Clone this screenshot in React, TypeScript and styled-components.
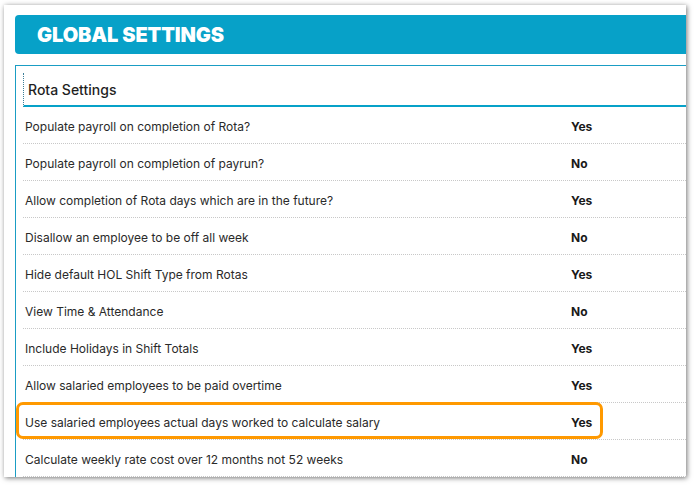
import React from "react";
import styled, { createGlobalStyle } from "styled-components";

const Global = createGlobalStyle`
  html, body { margin: 0; padding: 0; background: #ffffff; }
  body { font-family: Inter, "Noto Sans", Arial, sans-serif; }
`;

const Page = styled.div`
  padding: 5px 9px 9px 4px;
  height: 486px;
  box-sizing: border-box;
`;

const Card = styled.div`
  background: #ffffff;
  height: 472px;
  overflow: hidden;
  box-shadow: 1px 1px 5px rgba(0, 0, 0, 0.55);
  padding: 10px 0 0 11px;
  box-sizing: border-box;
`;

const Header = styled.div`
  height: 39px;
  background: #07a1c8;
  border-radius: 4px 0 0 4px;
  display: flex;
  align-items: center;
  padding-left: 22px;
  color: #ffffff;
  font-weight: 900;
  font-size: 20px;
  letter-spacing: -0.1px;
`;

const Panel = styled.div`
  margin-top: 11px;
  border-top: 1px solid #1a9dc4;
  border-left: 1px solid #1a9dc4;
  padding: 7px 0 0 7px;
  height: 420px;
`;

const PanelTitle = styled.div`
  height: 32px;
  border-left: 1px dotted #3b7f99;
  border-bottom: 2px solid #07a1c8;
  display: flex;
  align-items: center;
  padding-left: 4px;
  font-size: 14px;
  font-weight: 500;
  color: #1f1f1f;
`;

const Row = styled.div<{ $highlight?: boolean }>`
  position: relative;
  display: grid;
  grid-template-columns: 546px 1fr;
  align-items: center;
  height: 37px;
  box-sizing: border-box;
  padding: 2px 0 0 2px;
  border-bottom: 1px dotted #c8c8c8;
  font-size: 12px;
  color: #2a2a2a;

  ${(p) =>
    p.$highlight &&
    `
    &::after {
      content: "";
      position: absolute;
      left: -7px;
      top: -1px;
      width: 587px;
      height: 37px;
      box-sizing: border-box;
      border: 3px solid #ff9900;
      border-radius: 7px;
      pointer-events: none;
    }
  `}
`;

const Label = styled.span``;

const Value = styled.span`
  font-weight: 700;
  color: #1a1a1a;
`;

const settings: { label: string; value: string; highlight?: boolean }[] = [
  { label: "Populate payroll on completion of Rota?", value: "Yes" },
  { label: "Populate payroll on completion of payrun?", value: "No" },
  { label: "Allow completion of Rota days which are in the future?", value: "Yes" },
  { label: "Disallow an employee to be off all week", value: "No" },
  { label: "Hide default HOL Shift Type from Rotas", value: "Yes" },
  { label: "View Time & Attendance", value: "No" },
  { label: "Include Holidays in Shift Totals", value: "Yes" },
  { label: "Allow salaried employees to be paid overtime", value: "Yes" },
  {
    label: "Use salaried employees actual days worked to calculate salary",
    value: "Yes",
    highlight: true,
  },
  { label: "Calculate weekly rate cost over 12 months not 52 weeks", value: "No" },
];

export default function App() {
  return (
    <Page>
      <Global />
      <Card>
        <Header>GLOBAL SETTINGS</Header>
        <Panel>
          <PanelTitle>Rota Settings</PanelTitle>
          {settings.map((s) => (
            <Row key={s.label} $highlight={s.highlight}>
              <Label>{s.label}</Label>
              <Value>{s.value}</Value>
            </Row>
          ))}
        </Panel>
      </Card>
    </Page>
  );
}
